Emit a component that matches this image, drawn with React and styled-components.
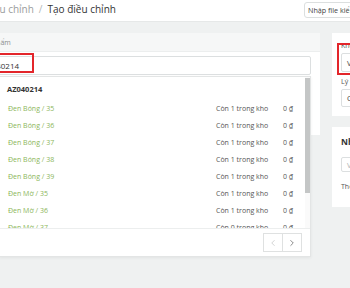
import React from 'react';
import styled, { createGlobalStyle } from 'styled-components';
import { ChevronLeft, ChevronRight } from 'lucide-react';

const GlobalStyle = createGlobalStyle`
  * { box-sizing: border-box; }
  html, body { margin: 0; padding: 0; }
  body {
    width: 350px;
    height: 288px;
    overflow: hidden;
    background: #eff1f1;
    font-family: "Open Sans", "Liberation Sans", sans-serif;
    color: #333;
  }
`;

const TopBar = styled.header`
  width: 420px;
  height: 22px;
  margin-left: -16px;
  background: #fff;
  border-bottom: 1px solid #e6e8e8;
  display: flex;
  align-items: center;
  justify-content: space-between;
`;

const Crumbs = styled.div`
  display: flex;
  align-items: center;
  font-size: 10px;
  padding-bottom: 3px;
`;

const Crumb = styled.span`
  color: ${({ $active }) => ($active ? '#333' : '#9a9d9d')};
`;

const Sep = styled.span`
  color: #b5b8b8;
  margin: 0 5px;
`;

const HeadButton = styled.button`
  width: 100px;
  height: 16px;
  margin-bottom: 2px;
  padding: 0 0 0 3px;
  text-align: left;
  white-space: nowrap;
  background: #fff;
  border: 1px solid #dcdfdf;
  border-radius: 3px;
  font-family: inherit;
  font-size: 7.2px;
  color: #444;
`;

const Main = styled.main`
  width: 620px;
  margin-left: -40px;
  padding-top: 11px;
  display: flex;
  align-items: flex-start;
  gap: 12px;
`;

const LeftColumn = styled.section`
  position: relative;
  flex: none;
  width: 360px;
`;

const Card = styled.div`
  background: #fff;
  height: 102px;
`;

const CardHead = styled.div`
  height: 19px;
  padding-left: 18px;
  display: flex;
  align-items: center;
  background: #f6f7f7;
  border-bottom: 1px solid #eceeee;
  font-size: 7px;
  color: #8a8d8d;
`;

const CardBody = styled.div`
  padding: 4px 9px 0 10px;
`;

const SearchInput = styled.input`
  display: block;
  width: 100%;
  height: 19px;
  padding: 0 0 0 11px;
  border: 1px solid #dcdfe0;
  border-radius: 2px;
  font-family: inherit;
  font-size: 8px;
  color: #333;
  outline: none;
`;

const Mark = styled.div`
  position: absolute;
  left: ${({ $left }) => $left}px;
  top: ${({ $top }) => $top}px;
  width: ${({ $w }) => $w}px;
  height: ${({ $h }) => $h}px;
  border: 2px solid #e3262b;
  pointer-events: none;
`;

const Popover = styled.div`
  position: absolute;
  left: 39px;
  top: 43px;
  width: 312px;
  height: 181px;
  display: flex;
  flex-direction: column;
  background: #fff;
  border: 1px solid #e3e5e5;
  box-shadow: 0 1px 3px rgba(0, 0, 0, 0.06);
`;

const ResultArea = styled.div`
  height: 152px;
  display: flex;
  border-bottom: 1px solid #eceeee;
  overflow: hidden;
`;

const ResultList = styled.div`
  flex: 1;
  overflow: hidden;
`;

const GroupTitle = styled.div`
  height: 23px;
  padding-left: 7px;
  display: flex;
  align-items: center;
  font-size: 7.5px;
  font-weight: 700;
  color: #333;
`;

const Row = styled.div`
  height: 17px;
  display: flex;
  align-items: center;
  font-size: 7px;
`;

const Name = styled.span`
  flex: 1;
  padding-left: 8px;
  color: #8cb65a;
`;

const Stock = styled.span`
  width: 67px;
  color: #555;
`;

const Price = styled.span`
  width: 22px;
  color: #555;
`;

const ScrollTrack = styled.div`
  width: 5px;
  padding-top: 1px;
  background: #fafafa;
`;

const ScrollThumb = styled.div`
  height: 115px;
  background: #c4c6c6;
`;

const Footer = styled.div`
  flex: 1;
  display: flex;
  align-items: center;
  justify-content: flex-end;
  padding-right: 8px;
`;

const PageButton = styled.button`
  width: 20px;
  height: 19px;
  padding: 0;
  display: flex;
  align-items: center;
  justify-content: center;
  background: #fff;
  border: 1px solid #dfe1e1;
  color: ${({ disabled }) => (disabled ? '#b8baba' : '#444')};
  & + & { margin-left: -1px; }
`;

const RightColumn = styled.aside`
  flex: none;
  width: 200px;
  display: flex;
  flex-direction: column;
  gap: 11px;
`;

const SideCard = styled.div`
  position: relative;
  background: #fff;
  padding: ${({ $pad }) => $pad};
`;

const FieldLabel = styled.div`
  font-size: 7px;
  line-height: 9px;
  margin: ${({ $first }) => ($first ? '0' : '5px')} 0 3px;
  color: #555;
`;

const SelectBox = styled.div`
  height: ${({ $h }) => $h}px;
  padding-left: 5px;
  display: flex;
  align-items: center;
  border: 1px solid #dcdfe0;
  border-radius: 2px;
  font-size: 7.5px;
  color: ${({ $muted }) => ($muted ? '#b0b3b3' : '#444')};
`;

const SideTitle = styled.div`
  font-size: 8.5px;
  line-height: 10px;
  font-weight: 700;
  color: #333;
  margin-bottom: 10px;
`;

const Hint = styled.div`
  margin-top: 10px;
  font-size: 7px;
  line-height: 10px;
  color: #555;
`;

const variants = [
  ['Đen Bóng / 35', 1],
  ['Đen Bóng / 36', 1],
  ['Đen Bóng / 37', 1],
  ['Đen Bóng / 38', 1],
  ['Đen Bóng / 39', 1],
  ['Đen Mờ / 35', 1],
  ['Đen Mờ / 36', 1],
  ['Đen Mờ / 37', 0],
  ['Đen Mờ / 38', 1],
];

export default function App() {
  return (
    <>
      <GlobalStyle />
      <TopBar>
        <Crumbs>
          <Crumb>Điều chỉnh</Crumb>
          <Sep>/</Sep>
          <Crumb $active>Tạo điều chỉnh</Crumb>
        </Crumbs>
        <HeadButton>Nhập file kiểm kê</HeadButton>
      </TopBar>

      <Main>
        <LeftColumn>
          <Card>
            <CardHead>Sản phẩm</CardHead>
            <CardBody>
              <SearchInput readOnly value="AZ040214" />
            </CardBody>
          </Card>
          <Mark $left={0} $top={20} $w={74} $h={20} />

          <Popover>
            <ResultArea>
              <ResultList>
                <GroupTitle>AZ040214</GroupTitle>
                {variants.map(([name, qty]) => (
                  <Row key={name}>
                    <Name>{name}</Name>
                    <Stock>Còn {qty} trong kho</Stock>
                    <Price>0 ₫</Price>
                  </Row>
                ))}
              </ResultList>
              <ScrollTrack>
                <ScrollThumb />
              </ScrollTrack>
            </ResultArea>
            <Footer>
              <PageButton disabled>
                <ChevronLeft size={10} strokeWidth={1.5} />
              </PageButton>
              <PageButton>
                <ChevronRight size={10} strokeWidth={1.5} />
              </PageButton>
            </Footer>
          </Popover>
        </LeftColumn>

        <RightColumn>
          <SideCard $pad="8px 9px 9px">
            <FieldLabel $first>Kho hàng</FieldLabel>
            <SelectBox $h={19}>Vinh - Kho tổng</SelectBox>
            <FieldLabel>Lý do</FieldLabel>
            <SelectBox $h={18}>Chọn lý do</SelectBox>
            <Mark $left={5} $top={10} $w={100} $h={32} />
          </SideCard>
          <SideCard $pad="10px 9px 15px">
            <SideTitle>Nhãn</SideTitle>
            <SelectBox $h={15} $muted>Vui lòng nhập nhãn</SelectBox>
            <Hint>Thêm nhãn để dễ tìm kiếm</Hint>
          </SideCard>
        </RightColumn>
      </Main>
    </>
  );
}
